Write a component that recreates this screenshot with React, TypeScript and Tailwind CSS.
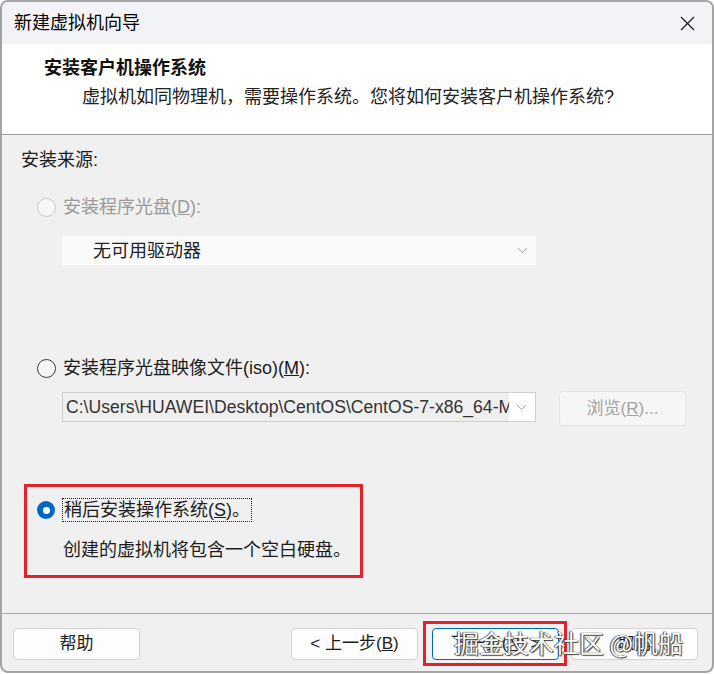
import React from "react";

const font = "font-['Liberation_Sans','Noto_Sans_CJK_SC',sans-serif]";

function Chevron() {
  return (
    <svg width="11" height="7" viewBox="0 0 11 7" className="shrink-0">
      <path d="M1 1 L5.5 5.5 L10 1" fill="none" stroke="#a8a8a8" strokeWidth="1" />
    </svg>
  );
}

function Radio({ state }: { state: "disabled" | "off" | "on" }) {
  if (state === "on") {
    return (
      <span className="w-[18px] h-[18px] rounded-full bg-[#0067c0] flex items-center justify-center shrink-0">
        <span className="w-[7px] h-[7px] rounded-full bg-white" />
      </span>
    );
  }
  return (
    <span
      className={
        state === "disabled"
          ? "w-[19px] h-[19px] rounded-full border border-[#c9c9c9] bg-[#f7f7f7] shrink-0"
          : "w-[19px] h-[19px] rounded-full border-[1.5px] border-[#3a3a3a] bg-[#f7f7f7] shrink-0"
      }
    />
  );
}

function Btn({ children, primary }: { children: React.ReactNode; primary?: boolean }) {
  return (
    <div
      className={
        "w-[127px] h-[32px] rounded-[4px] bg-[#fdfdfd] flex items-center justify-center text-[17px] text-[#1b1b1b] " +
        (primary ? "border border-[#0067c0]" : "border border-[#d3d3d3]")
      }
    >
      {children}
    </div>
  );
}

export default function App() {
  return (
    <div className={`w-[714px] h-[674px] bg-white ${font}`}>
      <div className="relative w-[714px] h-[673px] border-2 border-[#a4a4a4] rounded-[8px] overflow-hidden flex flex-col bg-[#f0f0f0]">
        {/* title bar */}
        <div className="h-[42px] bg-[#f2f3f7] flex items-center justify-between pl-[12px] pr-[17px] shrink-0">
          <span className="text-[18px] text-black leading-[24px]">新建虚拟机向导</span>
          <svg width="15" height="15" viewBox="0 0 15 15">
            <path d="M1 1 L14 14 M14 1 L1 14" stroke="#1a1a1a" strokeWidth="1.2" />
          </svg>
        </div>

        {/* header */}
        <div className="h-[91px] bg-white border-b border-[#a0a0a0] pt-[12px] pl-[42px] shrink-0">
          <div className="text-[18px] font-bold leading-[24px] text-[#111]">安装客户机操作系统</div>
          <div className="mt-[5px] ml-[38px] text-[18px] leading-[24px] text-[#222]">
            虚拟机如同物理机，需要操作系统。您将如何安装客户机操作系统?
          </div>
        </div>

        {/* body */}
        <div className="h-[478px] shrink-0 text-[18px] leading-[24px] text-[#1c1c1c]">
          <div className="ml-[19px] mt-[13px]">安装来源:</div>

          <div className="ml-[35px] mt-[23px] flex items-center gap-[7px] text-[#9a9a9a]">
            <Radio state="disabled" />
            <span>
              安装程序光盘(<span className="underline">D</span>):
            </span>
          </div>

          <div className="ml-[60px] mt-[17px] w-[474px] h-[29px] bg-[#fafafa] flex items-center justify-between pl-[31px] pr-[8px]">
            <span className="text-[#222]">无可用驱动器</span>
            <Chevron />
          </div>

          <div className="ml-[35px] mt-[91px] flex items-center gap-[7px]">
            <Radio state="off" />
            <span>
              安装程序光盘映像文件(iso)(<span className="underline">M</span>):
            </span>
          </div>

          <div className="ml-[60px] mt-[11px] flex items-start gap-[23px]">
            <div className="mt-[1px] w-[474px] h-[30px] bg-white border border-[#cfcfcf] flex items-center pr-[8px]">
              <div className="w-[446px] h-[28px] bg-[#efefef] overflow-hidden whitespace-nowrap pl-[3px] text-[17.6px] leading-[28px] text-[#333]">
                C:\Users\HUAWEI\Desktop\CentOS\CentOS-7-x86_64-Minimal-2009.iso
              </div>
              <div className="flex-1 flex justify-end">
                <Chevron />
              </div>
            </div>
            <div className="w-[127px] h-[35px] rounded-[4px] bg-[#f6f6f6] border border-[#e6e6e6] flex items-center justify-center text-[17px] text-[#a3a3a3]">
              浏览(<span className="underline">R</span>)...
            </div>
          </div>

          <div className="ml-[22px] mt-[58px] w-[339px] h-[94px] border-[3px] border-[#e3212b] pt-[11px] pl-[10px]">
            <div className="flex items-center gap-[7px]">
              <Radio state="on" />
              <span className="border border-dotted border-[#222] px-[1px] leading-[22px]">
                稍后安装操作系统(<span className="underline">S</span>)。
              </span>
            </div>
            <div className="mt-[16px] ml-[26px]">创建的虚拟机将包含一个空白硬盘。</div>
          </div>
        </div>

        {/* footer */}
        <div className="flex-1 border-t border-[#a8a8a8] flex items-start pl-[11px]">
          <div className="mt-[14px]">
            <Btn>帮助</Btn>
          </div>
          <div className="mt-[14px] ml-[151px]">
            <Btn>
              &lt; 上一步(<span className="underline">B</span>)
            </Btn>
          </div>
          <div className="mt-[7px] ml-[5px] border-[3px] border-[#e3212b] pt-[4px] pb-[3px] pl-[6px] pr-[5px]">
            <Btn primary>
              下一步(<span className="underline">N</span>) &gt;
            </Btn>
          </div>
          <div className="mt-[14px] ml-[4px]">
            <Btn>取消</Btn>
          </div>
        </div>

        {/* watermark */}
        <div className="absolute left-[452px] top-[624px] text-[25px] leading-[32px] text-white whitespace-nowrap [text-shadow:0_0_1px_#222,1px_1px_1px_#444,-1px_0_1px_#555] font-['Noto_Sans_CJK_SC',sans-serif]">
          掘金技术社区 @帆船
        </div>
      </div>
    </div>
  );
}
